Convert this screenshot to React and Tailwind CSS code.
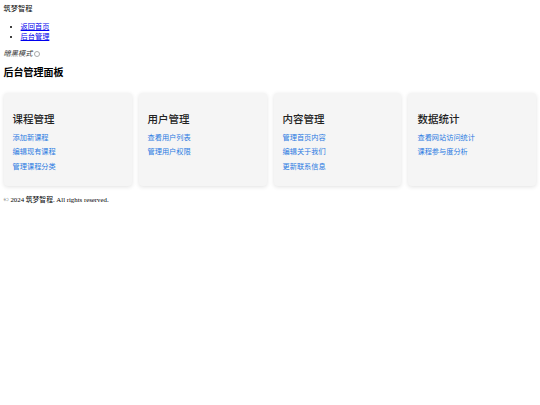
const SECTIONS = [
  { title: '课程管理', links: ['添加新课程', '编辑现有课程', '管理课程分类'] },
  { title: '用户管理', links: ['查看用户列表', '管理用户权限'] },
  { title: '内容管理', links: ['管理首页内容', '编辑关于我们', '更新联系信息'] },
  { title: '数据统计', links: ['查看网站访问统计', '课程参与度分析'] },
];

const SANS = "font-['Liberation_Sans','Noto_Sans_CJK_SC',sans-serif]";

export default function App() {
  return (
    <div className={`min-h-[405px] bg-white px-[3.6px] pt-[3.6px] text-black ${SANS}`}>
      <header>
        <div className="text-[7.2px] leading-[9px]">筑梦智程</div>
        <nav>
          <ul className="mt-[9.2px] mb-[7.2px] list-disc pl-[17px] text-[7.2px] leading-[10px]">
            <li>
              <a href="#" className="text-[#0000ee] underline">返回首页</a>
            </li>
            <li>
              <a href="#" className="text-[#0000ee] underline">后台管理</a>
            </li>
          </ul>
        </nav>
        <label className="flex items-center gap-[2px] text-[7.2px] italic leading-[10px] text-[#333]">
          暗黑模式
          <span className="inline-block h-[6px] w-[6px] rounded-full border border-[#aaa] bg-white" />
        </label>
      </header>

      <main>
        <h2 className="mt-[7px] mb-[13px] text-[10px] font-bold leading-[14px]">后台管理面板</h2>

        <div className="grid grid-cols-4 gap-[7px]">
          {SECTIONS.map((s) => (
            <div
              key={s.title}
              className="rounded-[4px] bg-[#f5f5f5] px-[9px] pt-[10px] pb-[11.5px] shadow-[0_1px_4px_rgba(0,0,0,0.12)]"
            >
              <h3 className="mt-[9px] mb-[5px] text-[10.5px] font-medium leading-[14px] text-[#222]">{s.title}</h3>
              {s.links.map((l) => (
                <a key={l} href="#" className="block text-[7.2px] leading-[14.5px] text-[#2a7ae2]">
                  {l}
                </a>
              ))}
            </div>
          ))}
        </div>
      </main>

      <footer className="mt-[9px] font-['Liberation_Serif','Noto_Sans_CJK_SC',serif] text-[6.8px] leading-[9px]">
        © 2024 筑梦智程. All rights reserved.
      </footer>
    </div>
  );
}
